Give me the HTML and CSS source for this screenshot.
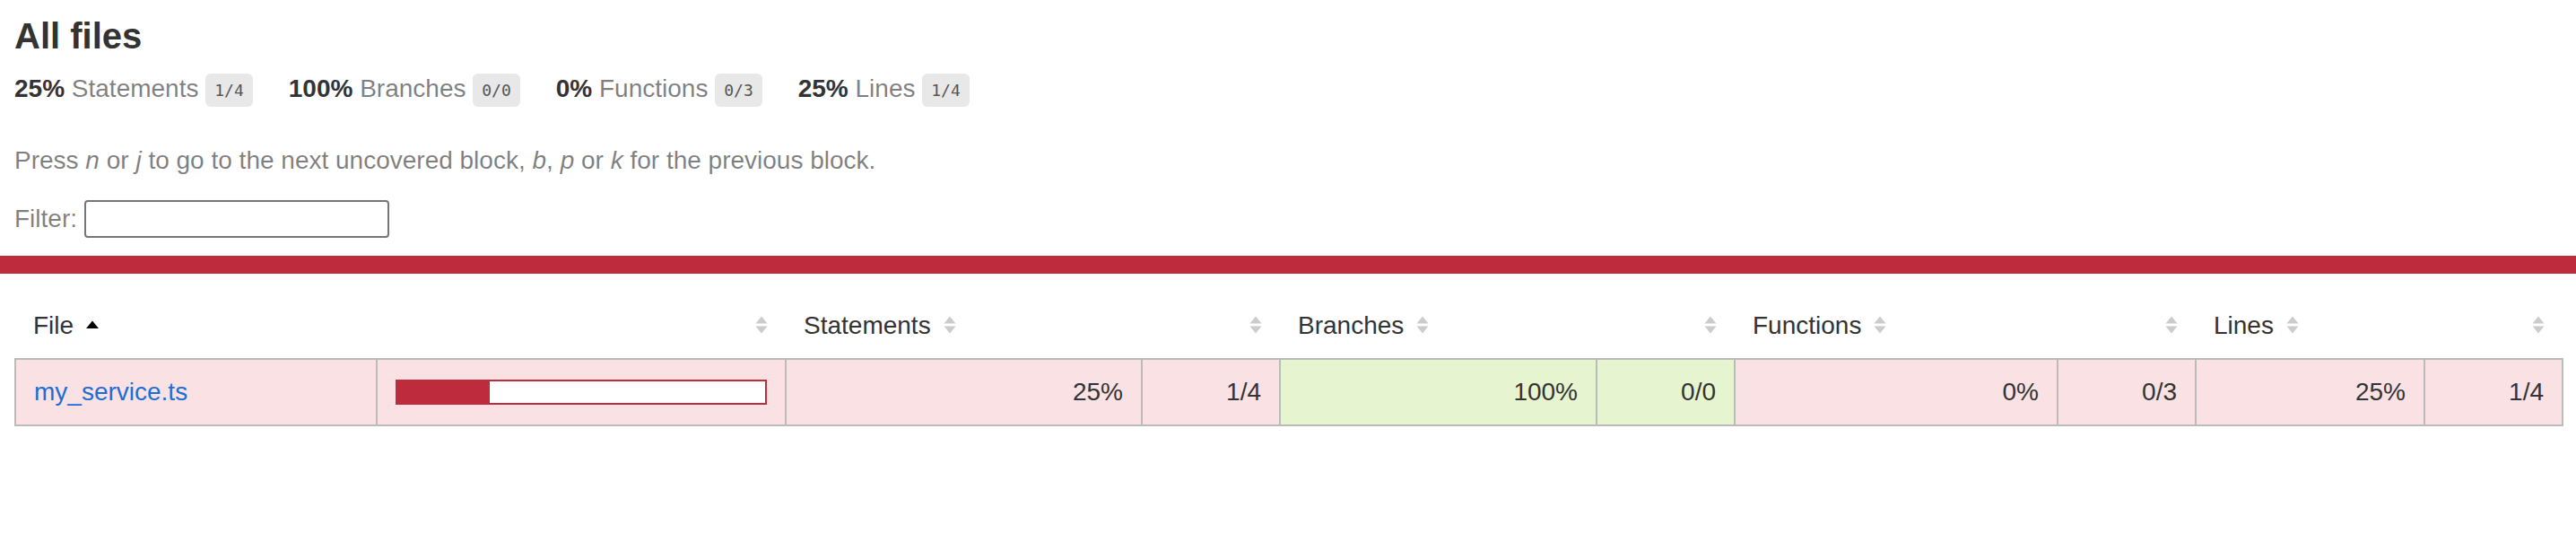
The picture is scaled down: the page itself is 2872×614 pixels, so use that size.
FILE: index.html
```html
<!DOCTYPE html>
<html lang="en">
<head>
<meta charset="utf-8">
<title>Code coverage report for All files</title>
<link rel="stylesheet" href="styles.css">
</head>
<body>
<div class="wrapper">
  <div class="pad1 header-pad">
    <h1>All files</h1>
    <div class="summary">
      <div class="summary-item"><span class="strong">25% </span> <span class="quiet">Statements</span> <span class="fraction">1/4</span></div>
      <div class="summary-item"><span class="strong">100% </span> <span class="quiet">Branches</span> <span class="fraction">0/0</span></div>
      <div class="summary-item"><span class="strong">0% </span> <span class="quiet">Functions</span> <span class="fraction">0/3</span></div>
      <div class="summary-item"><span class="strong">25% </span> <span class="quiet">Lines</span> <span class="fraction">1/4</span></div>
    </div>
    <p class="quiet hint">Press <em>n</em> or <em>j</em> to go to the next uncovered block, <em>b</em>, <em>p</em> or <em>k</em> for the previous block.</p>
    <div class="quiet filter">Filter: <input type="search" class="search" id="fileSearch"></div>
  </div>
  <div class="status-line low"></div>
  <div class="pad1 table-pad">
    <table class="coverage-summary">
      <colgroup>
        <col class="c-file"><col class="c-pic">
        <col class="c-spct"><col class="c-abs">
        <col class="c-bpct"><col class="c-abs">
        <col class="c-fpct"><col class="c-abs">
        <col class="c-lpct"><col class="c-abs">
      </colgroup>
      <thead>
        <tr>
          <th class="file sorted">File<span class="sorter"><svg width="14" height="20" viewBox="0 0 14 20"><path d="M0 14 L7 5.5 L14 14 Z" fill="#000"/></svg></span></th>
          <th class="pic"><span class="sorter"><svg width="14" height="20" viewBox="0 0 14 20"><path d="M0.5 8.5 L7 0.5 L13.5 8.5 Z M0.5 11.5 L13.5 11.5 L7 19.5 Z" fill="#cccccc"/></svg></span></th>
          <th class="pct">Statements<span class="sorter"><svg width="14" height="20" viewBox="0 0 14 20"><path d="M0.5 8.5 L7 0.5 L13.5 8.5 Z M0.5 11.5 L13.5 11.5 L7 19.5 Z" fill="#cccccc"/></svg></span></th>
          <th class="abs"><span class="sorter"><svg width="14" height="20" viewBox="0 0 14 20"><path d="M0.5 8.5 L7 0.5 L13.5 8.5 Z M0.5 11.5 L13.5 11.5 L7 19.5 Z" fill="#cccccc"/></svg></span></th>
          <th class="pct">Branches<span class="sorter"><svg width="14" height="20" viewBox="0 0 14 20"><path d="M0.5 8.5 L7 0.5 L13.5 8.5 Z M0.5 11.5 L13.5 11.5 L7 19.5 Z" fill="#cccccc"/></svg></span></th>
          <th class="abs"><span class="sorter"><svg width="14" height="20" viewBox="0 0 14 20"><path d="M0.5 8.5 L7 0.5 L13.5 8.5 Z M0.5 11.5 L13.5 11.5 L7 19.5 Z" fill="#cccccc"/></svg></span></th>
          <th class="pct">Functions<span class="sorter"><svg width="14" height="20" viewBox="0 0 14 20"><path d="M0.5 8.5 L7 0.5 L13.5 8.5 Z M0.5 11.5 L13.5 11.5 L7 19.5 Z" fill="#cccccc"/></svg></span></th>
          <th class="abs"><span class="sorter"><svg width="14" height="20" viewBox="0 0 14 20"><path d="M0.5 8.5 L7 0.5 L13.5 8.5 Z M0.5 11.5 L13.5 11.5 L7 19.5 Z" fill="#cccccc"/></svg></span></th>
          <th class="pct">Lines<span class="sorter"><svg width="14" height="20" viewBox="0 0 14 20"><path d="M0.5 8.5 L7 0.5 L13.5 8.5 Z M0.5 11.5 L13.5 11.5 L7 19.5 Z" fill="#cccccc"/></svg></span></th>
          <th class="abs"><span class="sorter"><svg width="14" height="20" viewBox="0 0 14 20"><path d="M0.5 8.5 L7 0.5 L13.5 8.5 Z M0.5 11.5 L13.5 11.5 L7 19.5 Z" fill="#cccccc"/></svg></span></th>
        </tr>
      </thead>
      <tbody>
        <tr>
          <td class="file low"><a href="#">my_service.ts</a></td>
          <td class="pic low"><div class="chart"><div class="cover-fill" style="width: 25%"></div><div class="cover-empty" style="width: 75%"></div></div></td>
          <td class="pct low">25%</td>
          <td class="abs low">1/4</td>
          <td class="pct high">100%</td>
          <td class="abs high">0/0</td>
          <td class="pct low">0%</td>
          <td class="abs low">0/3</td>
          <td class="pct low">25%</td>
          <td class="abs low">1/4</td>
        </tr>
      </tbody>
    </table>
  </div>
</div>
</body>
</html>
```

FILE: styles.css
```css
*, *::before, *::after {
  box-sizing: border-box;
}

html, body {
  margin: 0;
  padding: 0;
  background: #fff;
}

body {
  font-family: "Liberation Sans", Arial, Helvetica, sans-serif;
  font-size: 28px;
  color: #333;
}

.pad1 {
  padding: 18px 16px;
}

.header-pad {
  padding-bottom: 20px;
}

.table-pad {
  padding-top: 22px;
}

h1 {
  font-size: 40px;
  margin: 0;
  font-weight: bold;
}

.summary {
  display: flex;
}

.summary-item {
  padding: 20px 40px 20px 0;
  white-space: nowrap;
}

.strong {
  font-weight: bold;
}

.quiet {
  color: rgba(0, 0, 0, 0.5);
}

.fraction {
  font-family: "DejaVu Sans Mono", "Liberation Mono", monospace;
  font-size: 18px;
  color: #555;
  background: #e8e8e8;
  padding: 8px 10px;
  border-radius: 6px;
  vertical-align: middle;
}

.hint {
  margin: 28px 0;
}

.search {
  width: 340px;
  height: 42px;
  border: 2px solid #767676;
  border-radius: 4px;
  padding: 0 4px;
  font: 26.67px "Liberation Sans", Arial, sans-serif;
  background: #fff;
  -webkit-appearance: none;
  appearance: none;
  vertical-align: baseline;
  margin: 0;
}

.status-line {
  height: 20px;
}

.status-line.low {
  background: #bd2b3c;
}

.coverage-summary {
  border-collapse: collapse;
  width: 100%;
  table-layout: fixed;
}

.c-file { width: 403px; }
.c-pic { width: 456px; }
.c-spct { width: 397px; }
.c-bpct { width: 353px; }
.c-fpct { width: 360px; }
.c-lpct { width: 255px; }
.c-abs { width: 154px; }

.coverage-summary tr {
  border-bottom: 2px solid #bbb;
}

.coverage-summary tbody {
  border: 2px solid #bbb;
}

.coverage-summary th,
.coverage-summary td {
  padding: 20px;
}

.coverage-summary td {
  border-right: 2px solid #bbb;
}

.coverage-summary td:last-child {
  border-right: none;
}

.coverage-summary th {
  text-align: left;
  font-weight: normal;
  white-space: nowrap;
}

.coverage-summary th.pic,
.coverage-summary th.abs,
.coverage-summary td.pct,
.coverage-summary td.abs {
  text-align: right;
}

.coverage-summary td.file {
  white-space: nowrap;
}

.coverage-summary a {
  color: #1a6fd6;
  text-decoration: none;
}

.sorter {
  display: inline-block;
  width: 14px;
  height: 20px;
  margin-left: 14px;
  vertical-align: baseline;
}

.sorter svg {
  display: block;
}

.low {
  background: #fae1e4;
}

.high {
  background: rgb(230, 245, 208);
}

.chart {
  display: flex;
  border: 2px solid #bd2b3c;
}

.cover-fill,
.cover-empty {
  height: 24px;
}

.cover-fill {
  background: #bd2b3c;
}

.cover-empty {
  background: #fff;
}
```
